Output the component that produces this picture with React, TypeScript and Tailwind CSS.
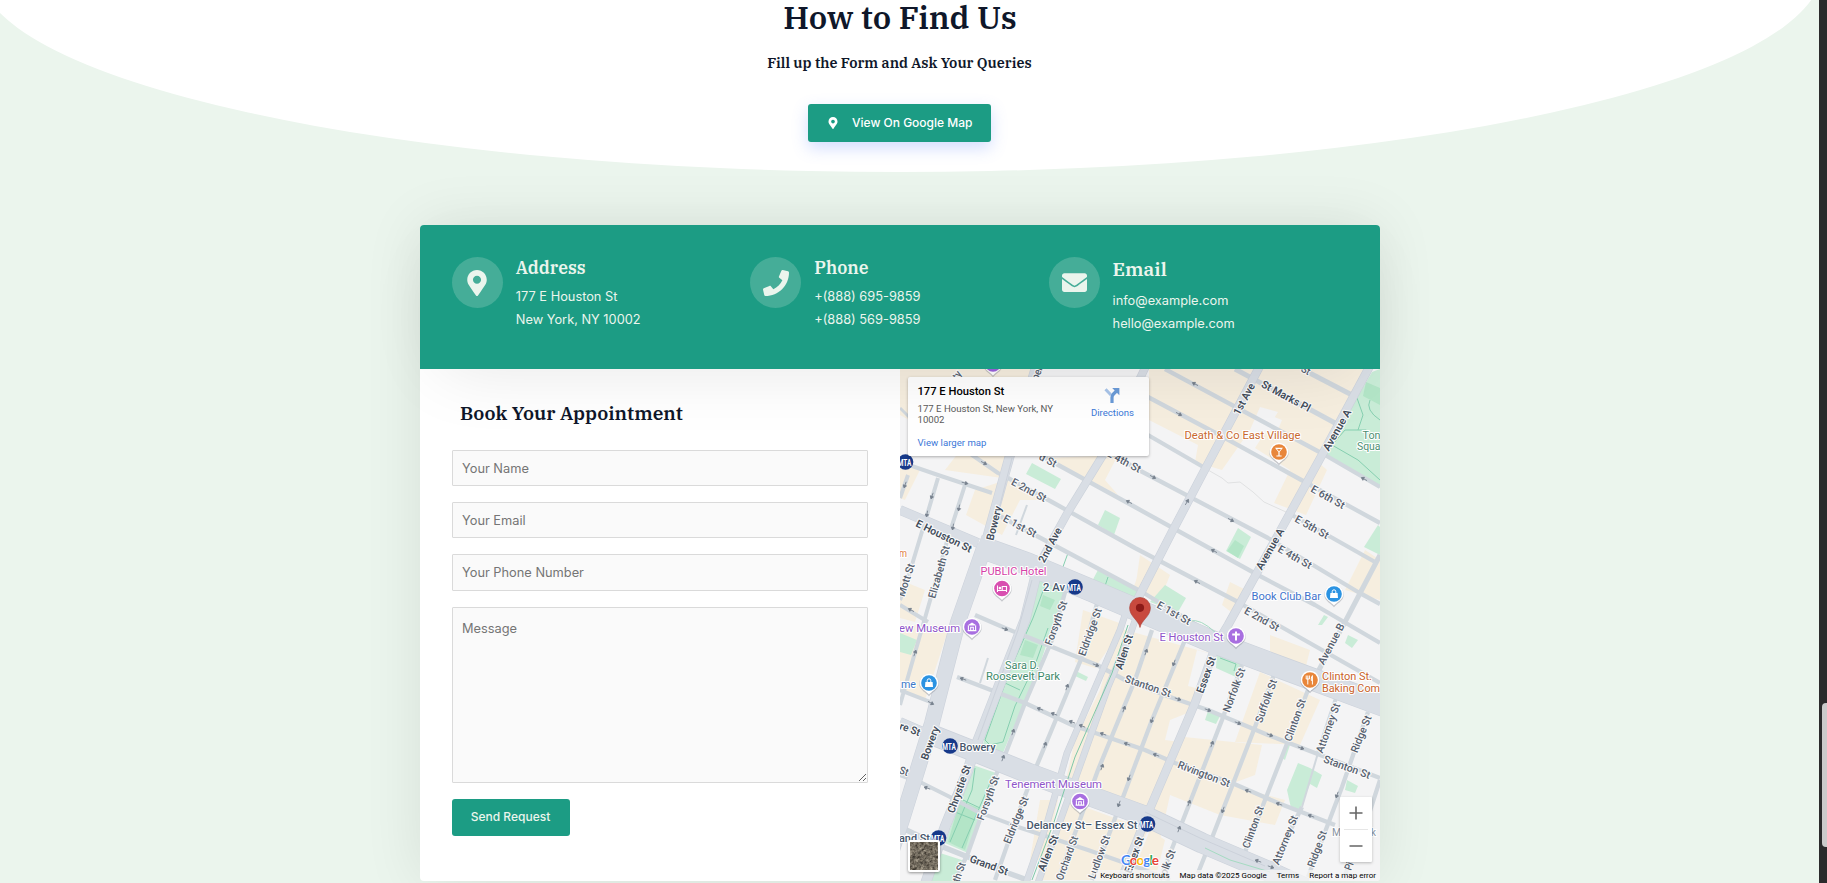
import React from "react";
import { FaEnvelope, FaMapMarkerAlt, FaPhone } from "react-icons/fa";

const serif = "font-['IBM_Plex_Serif','DejaVu_Serif_Condensed','DejaVu_Serif',serif]";

/* ---------- map data ---------- */

const tan = [
  "900,369 1032,369 1002,478 945,470 962,448 900,415",
  "1149,369 1368,369 1318,462 1327,470 1306,515 1274,503 1290,470 1255,448 1278,412 1260,407 1250,430 1222,470 1195,462 1198,445 1149,420",
  "900,462 920,470 905,500 900,498",
  "1006,480 1050,500 1020,500 1002,535 966,515 975,490",
  "1048,458 1118,495 1105,480 1118,455",
  "1140,555 1170,575 1160,600 1135,590",
  "1230,582 1250,592 1235,615 1222,605",
  "1365,550 1380,560 1380,600 1345,590",
  "1140,570 1128,602 1142,610",
  "900,580 925,590 915,622 900,618",
  "900,625 950,625 925,700 900,690",
  "1083,610 1125,625 1095,668 1075,662",
  "1118,628 1216,655 1150,815 1064,788 1075,740 1100,690",
  "1270,635 1310,650 1305,670 1270,662",
  "1260,672 1320,700 1300,745 1235,742 1250,700",
  "1165,735 1262,745 1255,775 1215,790 1160,780",
  "1155,765 1285,800 1275,825 1220,815 1170,795 1160,840 1135,815",
  "1065,800 1148,830 1125,880 1035,880",
  "1150,830 1165,840 1155,880 1130,880",
  "1040,800 1058,800 1045,860 1030,860",
];

const pale = [
  "1197,650 1215,655 1203,690 1188,686",
  "1170,720 1190,712 1180,742 1165,740",
  "1262,412 1282,420 1275,437 1255,430",
];

const green = [
  "1040,578 1067,585 1053,625 1038,670 1002,755 983,745 988,720 1027,620",
  "973,765 996,773 968,853 945,843",
  "940,853 965,861 955,881 927,881",
  "990,540 1032,558 1028,564 985,550",
  "1050,563 1086,578 1082,585 1046,572",
  "1098,570 1140,590 1134,602 1090,585",
  "1032,463 1061,479 1055,489 1026,474",
  "1105,510 1120,518 1114,535 1098,525",
  "1238,528 1251,537 1240,559 1226,551",
  "1165,585 1186,598 1178,612 1150,602",
  "1378,525 1380,527 1380,555 1364,547",
  "900,633 917,640 911,655 900,652",
  "1217,652 1242,665 1236,677 1216,668",
  "1208,711 1220,716 1216,724 1205,720",
  "1298,763 1310,768 1322,775 1317,788 1310,784 1300,810 1291,808 1287,790",
  "1290,745 1285,760 1282,758 1286,745",
  "1347,780 1358,786 1355,793 1345,790",
  "1076,671 1088,677 1086,681 1075,676",
  "1348,635 1358,640 1352,648 1345,643",
  "1324,615 1328,617 1322,625 1318,625",
];

const darkGreen = [
  "1235,540 1244,546 1238,558 1227,551",
  "1366,382 1380,388 1380,405 1363,396",
  "1043,595 1055,600 1050,610 1040,606",
  "1025,640 1038,645 1033,658 1020,655",
  "960,800 978,808 965,850 948,842",
];

const parkPaths = [
  "1047,580 1033,618 1010,670 985,740 990,745 1003,742 1015,706 1035,665 1048,628",
  "1005,683 1020,690 M1002,694 L1025,703",
  "975,768 972,790 950,842 M993,776 L962,848",
  "963,800 980,808 M955,812 L975,820",
  "1380,440 1366,430 1345,430 1332,445 1358,460 1380,480",
  "1357,398 1363,415 1358,430 M1370,400 Q1365,410 1380,420",
  "1068,553 1060,575 M1108,577 L1103,592",
  "1220,658 1236,664 1234,671",
];

const minor: [string, number][] = [
  ["900,462 938,475 992,493", 4],
  ["962,448 998,473 1008,478", 4],
  ["900,408 912,420", 3],
  ["908,475 900,498", 4],
  ["938,478 927,515 908,578 900,600", 4],
  ["965,485 948,538 925,618 912,663 900,705", 4],
  ["1027,505 1016,535", 2],
  ["998,515 1035,535 1142,592 1205,630", 4.3],
  ["1008,478 1052,502 1135,548 1238,602 1278,625 1380,683", 4.3],
  ["1040,455 1135,507 1258,575 1315,605 1380,643", 4.3],
  ["1115,455 1135,468 1268,538 1358,592 1380,604", 4.3],
  ["1148,435 1205,468", 4.3],
  ["1292,515 1375,562", 4.3],
  ["1148,397 1225,438 1305,482 1380,523", 4.3],
  ["1165,369 1325,455 1380,487", 4.3],
  ["1235,369 1335,423", 5],
  ["1302,369 1352,395", 5],
  ["1380,555 1345,622 1308,690", 5],
  ["900,605 928,622", 4],
  ["900,690 933,703", 4],
  ["957,677 1025,703 1072,725 1145,750 1175,763 1232,783 1278,803 1335,825", 4.3],
  ["975,615 1005,628 1097,665 1125,680 1170,697 1208,710 1268,735 1302,748 1380,778", 4.3],
  ["900,775 922,783 950,797 978,812 1018,827 1088,850 1145,870 1170,880", 4],
  ["900,827 938,845 968,857 1008,873 1030,881", 5.5],
  ["1067,585 1052,640 1025,703 1005,755 995,777 968,853 955,881", 4.3],
  ["1098,600 1082,657 1032,777 1016,820 995,880", 4.3],
  ["1152,630 1135,680 1098,770 1058,880", 4.3],
  ["1185,640 1152,720 1108,837 1092,880", 4.3],
  ["1242,665 1222,720 1178,833 1160,880", 4.3],
  ["1275,672 1255,727 1210,843 1198,873", 4.3],
  ["1308,690 1265,800 1242,860", 4.3],
  ["1337,695 1318,753", 4],
  ["1318,753 1302,807", 2],
  ["1302,807 1272,867", 4.3],
  ["1368,712 1342,787 1308,877", 4.3],
  ["1380,780 1368,817 1345,875", 4.3],
  ["988,658 980,683", 2],
];

const major: [string, number][] = [
  ["1038,360 1010,455 985,545", 9],
  ["985,545 958,622 932,723 902,820 892,850", 15],
  ["900,510 978,543", 9],
  ["978,546 1028,564 1095,592 1142,612 1218,644 1285,669 1385,706", 22],
  ["1146,366 1103,455 1068,512 1036,570", 7.5],
  ["1036,575 1025,620 1008,663 975,748 968,770 945,827 925,885", 10],
  ["1262,362 1202,475 1172,532 1133,608", 8],
  ["1126,612 1120,630 1067,753 1048,820 1026,883", 6],
  ["1138,612 1130,635 1108,687 1082,760 1058,827 1038,883", 6],
  ["1372,362 1322,455 1278,535 1228,625 1216,645 1195,703 1148,813 1120,883", 8],
  ["900,722 930,735", 9],
  ["930,734 978,753 1028,773 1082,793 1145,816 1202,843 1268,871 1305,888", 20],
];

const arrows: [number, number, number][] = [
  [984, 463, 28], [905, 485, 110], [932, 496, 110], [965, 483, 14], [927, 514, 100], [959, 508, 100], [953, 527, 100],
  [1129, 502, 208], [1195, 384, 208], [1179, 414, 28], [1153, 477, 28], [1231, 520, 28], [1214, 551, 208], [1197, 582, 208], [1187, 502, -60],
  [1364, 479, 208], [911, 610, 208], [1005, 629, 20], [1096, 665, 20], [915, 653, -70], [963, 679, 200], [931, 703, 28], [1067, 687, -70],
  [1040, 709, 200], [1054, 714, 200], [1072, 722, 200], [1082, 726, 200], [1103, 734, 200], [1127, 744, 200], [1013, 732, -70], [1045, 745, -70],
  [1124, 709, -70], [1102, 767, -70], [1129, 778, 110], [1119, 804, 110], [1003, 758, -70], [927, 788, 200], [1146, 652, -70], [1174, 663, 110],
  [1152, 720, 110], [1178, 699, 20], [1208, 710, 20], [1238, 723, 20], [1270, 735, 20], [1301, 748, 20], [1212, 744, -70], [1156, 755, 200],
  [1248, 791, 200], [1279, 804, 200], [1311, 816, 200], [1189, 803, -70], [1223, 810, 110], [1179, 829, -70], [1337, 795, 110], [1258, 861, 200], [1271, 867, 20],
];

type Street = [string, number, number, number, number];
const streets: Street[] = [
  ["St Marks Pl", 1286, 396, 28, 54], ["1st Ave", 1244, 399, -62, 34], ["Avenue A", 1337, 430, -60, 46],
  ["Avenue A", 1270, 549, -60, 46], ["E 6th St", 1328, 497, 29, 37], ["E 5th St", 1312, 527, 29, 37],
  ["E 4th St", 1295, 557, 29, 37], ["E 4th St", 1124, 461, 28, 37], ["d St", 1048, 460, 28, 18],
  ["E 2nd St", 1029, 490, 28, 38], ["E 1st St", 1020, 526, 28, 36], ["E 1st St", 1174, 613, 29, 37],
  ["E 2nd St", 1262, 619, 29, 38], ["Bowery", 994, 523, -76, 35], ["2nd Ave", 1050, 545, -62, 38],
  ["E Houston St", 944, 536, 26, 61], ["Elizabeth St", 939, 572, -74, 54], ["Mott St", 906, 580, -72, 34],
  ["Forsyth St", 1056, 623, -70, 46], ["Eldridge St", 1090, 632, -70, 50], ["Allen St", 1124, 652, -72, 36],
  ["Allen St", 1048, 853, -68, 38], ["Essex St", 1206, 675, -70, 38], ["Norfolk St", 1234, 690, -70, 46],
  ["Suffolk St", 1266, 701, -70, 45], ["Clinton St", 1295, 720, -70, 44], ["Attorney St", 1328, 728, -70, 52],
  ["Ridge St", 1361, 734, -68, 39], ["Clinton St", 1253, 827, -70, 44], ["Attorney St", 1285, 840, -68, 52],
  ["Ridge St", 1317, 849, -70, 38], ["Avenue B", 1331, 644, -62, 45], ["Stanton St", 1148, 686, 19, 48],
  ["Stanton St", 1347, 767, 20, 49], ["Rivington St", 1204, 774, 21, 55], ["Bowery", 930, 743, -70, 35],
  ["Chrystie St", 959, 789, -70, 50], ["Forsyth St", 988, 798, -70, 46], ["th St", 959, 872, -70, 20],
  ["Eldridge St", 1016, 820, -68, 50], ["Orchard St", 1067, 858, -70, 46], ["Ludlow St", 1099, 857, -70, 45],
  ["Essex St", 1134, 855, -70, 38], ["folk St", 1167, 864, -70, 30], ["Grand St", 989, 865, 20, 40],
  ["re St", 910, 729, 20, 21], ["St", 904, 771, 20, 9], ["Pi", 1349, 866, -70, 8],
  ["St", 1306, 370, 29, 9], ["per", 1037, 373, -70, 14], ["ty", 957, 375, -55, 8],
];
const boldStreets = new Set(["St Marks Pl", "E Houston St", "Avenue A", "1st Ave", "2nd Ave", "Bowery", "Essex St", "Allen St", "Chrystie St", "Grand St", "re St"]);

type Place = [string, number, number, number, string];
const ink = "#46566b";
const places: Place[] = [
  ["Death & Co East Village", 1184.5, 438.5, 116, "#c9692f"],
  ["Ton", 1362.5, 438.5, 18, "#4d8f72"],
  ["Squa", 1357, 449.5, 23.5, "#4d8f72"],
  ["PUBLIC Hotel", 980.5, 575, 66, "#d63fa8"],
  ["2 Av", 1043, 591, 22, ink],
  ["m", 899, 557, 8, "#e07b3c"],
  ["ew Museum", 899, 632, 61, "#8f55c9"],
  ["me", 901, 688, 15, "#3b78c8"],
  ["Sara D.", 1005, 668.5, 34, "#3f8a6b"],
  ["Roosevelt Park", 986, 679.5, 74, "#3f8a6b"],
  ["Tenement Museum", 1005, 788, 97, "#8f55c9"],
  ["Bowery", 959.5, 750.5, 36, ink],
  ["Delancey St– Essex St", 1026.5, 829, 111, ink],
  ["and St", 899, 842, 31, ink],
  ["E Houston St", 1159.5, 641, 64, "#8f55c9"],
  ["Clinton St.", 1322, 680, 50, "#c9622a"],
  ["Baking Com", 1322, 691.5, 58, "#c9622a"],
  ["Book Club Bar", 1251.5, 599.5, 69.5, "#3f74cc"],
  ["M", 1332, 836, 9, "#8994a3"],
  ["k", 1371, 836, 5, "#8994a3"],
];

function Marker({ x, y, color, children }: { x: number; y: number; color: string; children?: React.ReactNode }) {
  return (
    <g transform={`translate(${x} ${y})`}>
      <path d="M-9.6 1.5 A9.7 9.7 0 1 1 9.6 1.5 C8.5 6.5 3.5 8.5 0 12.5 C-3.5 8.5 -8.5 6.5 -9.6 1.5Z" fill="#8a8f99" opacity=".45" transform="translate(0 .7)" />
      <path d="M-9.3 1.5 A9.4 9.4 0 1 1 9.3 1.5 C8 6 3 8 0 11.6 C-3 8 -8 6 -9.3 1.5Z" fill="#fff" />
      <circle r="7.8" fill={color} />
      {children}
    </g>
  );
}

const Museum = () => (
  <g fill="none" stroke="#fff" strokeWidth="1.1">
    <path d="M-4.6 -1.5 L0 -4.4 L4.6 -1.5Z" fill="#fff" stroke="none" />
    <path d="M-3.6 -1.2 V3.6 M3.6 -1.2 V3.6 M-4.4 3.6 H4.4 M-1.3 3 V.3 H1.3 V3" />
  </g>
);

const Bag = () => (
  <g>
    <path d="M-3.6 -1 H3.6 L4 4 H-4Z" fill="#fff" />
    <path d="M-1.8 -1 V-2.4 A1.8 1.8 0 0 1 1.8 -2.4 V-1" fill="none" stroke="#fff" />
  </g>
);

function Subway({ x, y }: { x: number; y: number }) {
  return (
    <g transform={`translate(${x} ${y})`}>
      <circle r="7.8" fill="#16398a" />
      <text y="3.5" x="-1" fontSize="9.6" fontWeight="700" fill="#fff" textAnchor="middle" textLength="13.6" lengthAdjust="spacingAndGlyphs">
        MTA
      </text>
    </g>
  );
}

function StreetMap() {
  return (
    <svg viewBox="900 369 480 512" className="block h-[512px] w-[480px] font-[Roboto,sans-serif]">
      <rect x="900" y="369" width="480" height="512" fill="#f4f4f5" />
      {tan.map((p) => <polygon key={p} points={p} fill="#f6eedf" />)}
      {pale.map((p) => <polygon key={p} points={p} fill="#f4f4f5" />)}
      <polygon points="1372,372 1380,369 1380,488 1324,455" fill="#c9ecd7" />
      {green.map((p) => <polygon key={p} points={p} fill="#c9ecd7" />)}
      {darkGreen.map((p) => <polygon key={p} points={p} fill="#b3e5c7" />)}
      {parkPaths.map((p) => <path key={p} d={"M" + p} fill="none" stroke="#86cfb0" strokeWidth="1" />)}
      <path d="M1208 470 L1222 478 L1228 483 L1240 482 L1253 492 L1264 502 L1286 512" fill="none" stroke="#e0e1e2" />
      {minor.map(([p, w]) => <polyline key={p} points={p} fill="none" stroke="#d0d7dd" strokeWidth={w} strokeLinejoin="round" />)}
      {major.map(([p, w]) => <polyline key={p} points={p} fill="none" stroke="#ccd2db" strokeWidth={w + 0.8} strokeLinejoin="round" />)}
      {major.map(([p, w]) => <polyline key={p} points={p} fill="none" stroke="#d9dee5" strokeWidth={w - 0.4} strokeLinejoin="round" />)}
      <path d="M1012 458 L991 540 M1032 580 L1018 630 L978 740 M1145 812 L1200 838 L1265 866" fill="none" stroke="#c6ccd6" strokeWidth=".7" />
      <polyline points="1128,625 1112,673 1075,757 1054,822 1032,880" fill="none" stroke="#7fc8a8" strokeWidth="1" />
      <path d="M1190 621 Q1200 618 1216 633 M1205 848 L1230 860 L1270 872" fill="none" stroke="#a5dbc2" />
      {arrows.map(([x, y, r]) => (
        <path key={`${x}-${y}`} d="M-3.4 0 H1 M3 0 L.4 -1.7 V1.7Z" transform={`translate(${x} ${y}) rotate(${r})`} fill="#77818d" stroke="#77818d" strokeWidth=".8" />
      ))}
      {streets.map(([t, x, y, r, w]) => (
        <text
          key={`${t}${x}${y}`}
          transform={`translate(${x} ${y}) rotate(${r})`}
          y="3.7"
          textAnchor="middle"
          textLength={w}
          fontSize="10.6"
          fontWeight={boldStreets.has(t) ? 600 : 500}
          fill={boldStreets.has(t) ? "#434d5b" : "#56606e"}
          stroke="#fafafa"
          strokeWidth="2.2"
          strokeLinejoin="round"
          paintOrder="stroke"
          lengthAdjust="spacingAndGlyphs"
        >
          {t}
        </text>
      ))}
      <Marker x={993} y={364} color="#9a62dc" />
      <Marker x={1279} y={452} color="#e8863a">
        <path d="M-4 -4.2 H4 L.6 0 V3.4 H2.6 V4.4 H-2.6 V3.4 H-.6 V0Z" fill="#fff" />
        <path d="M-2 -3 H2 L0 -.6Z" fill="#e8863a" />
      </Marker>
      <Marker x={1002} y={588.5} color="#d84fb0">
        <path d="M-4.5 -3 V3.4 M-4.5 2 H4.5 M4.5 3.4 V-2 H.2 V1.5" fill="none" stroke="#fff" strokeWidth="1.1" />
        <circle cx="-2.1" cy="-.4" r="1.3" fill="#fff" />
      </Marker>
      <Marker x={972} y={627} color="#a86fe0"><Museum /></Marker>
      <Marker x={1080} y={801.5} color="#a86fe0"><Museum /></Marker>
      <Marker x={929} y={683} color="#2b93e2"><Bag /></Marker>
      <Marker x={1334} y={594} color="#2b93e2"><Bag /></Marker>
      <Marker x={1236} y={636} color="#a86fe0">
        <path d="M0 -4.6 V4.6 M-3.8 -1.6 H3.8" stroke="#fff" strokeWidth="2" />
      </Marker>
      <Marker x={1310} y={680} color="#e8863a">
        <path d="M-2.2 -4.5 V4.5 M-3.8 -4.5 V-1 H-.6 V-4.5 M2.4 4.5 V-4.4 Q.8 -2 1.3 .4 H2.4" fill="none" stroke="#fff" strokeWidth="1" />
      </Marker>
      {places.map(([t, x, y, w, c]) => (
        <text key={`${t}${x}`} x={x} y={y} textLength={w} lengthAdjust="spacingAndGlyphs" fontSize="11.2" fontWeight={c === ink ? 500 : 400} fill={c} stroke="#fff" strokeWidth="2.2" strokeLinejoin="round" paintOrder="stroke">
          {t}
        </text>
      ))}
      <Subway x={905.5} y={462} />
      <Subway x={1075} y={587} />
      <Subway x={950} y={746} />
      <Subway x={938.5} y={838} />
      <Subway x={1147.5} y={824} />
      <path d="M1140 627.5 C1138.5 620 1129.6 616.5 1129.6 607.8 A10.4 10.4 0 0 1 1150.4 607.8 C1150.4 616.5 1141.5 620 1140 627.5Z" fill="#c8493e" stroke="#a93a31" strokeWidth=".6" />
      <circle cx="1140" cy="607.8" r="4.1" fill="#8c1a18" />
      <text x="1121" y="864.5" fontSize="13.5" textLength="38" className="font-[Lato,sans-serif]" fontWeight="700" stroke="#fff" strokeWidth="1.8" paintOrder="stroke">
        <tspan fill="#4285f4">G</tspan>
        <tspan fill="#ea4335">o</tspan>
        <tspan fill="#fbbc04">o</tspan>
        <tspan fill="#4285f4">g</tspan>
        <tspan fill="#34a853">l</tspan>
        <tspan fill="#ea4335">e</tspan>
      </text>
    </svg>
  );
}

function SatelliteThumb() {
  return (
    <div className="absolute bottom-[9px] left-[8px] h-8 w-8 overflow-hidden rounded-[2px] border-2 border-white bg-[#6c6657] shadow-[0_1px_3px_rgba(0,0,0,0.4)]">
      <svg className="block h-full w-full" viewBox="0 0 28 28">
        <filter id="grain" colorInterpolationFilters="sRGB">
          <feTurbulence type="fractalNoise" baseFrequency="0.35" numOctaves="3" />
          <feColorMatrix values="0.7 0.2 0 0 0.0  0.68 0.2 0 0 -0.02  0.62 0.2 0 0 -0.04  0 0 0 0 1" />
        </filter>
        <rect width="28" height="28" filter="url(#grain)" />
        <path d="M0 20 L12 8 L28 2 M4 28 L18 14 L28 10" stroke="#3d3a31" strokeWidth="1.2" fill="none" opacity=".4" />
      </svg>
    </div>
  );
}

function MapPanel() {
  return (
    <div className="relative h-[512px] w-[480px] overflow-hidden rounded-br font-[Roboto,sans-serif]">
      <StreetMap />
      <div className="absolute left-[8px] top-[8px] flex h-[79px] w-[241px] justify-between rounded-[2px] bg-white pl-[9.5px] pr-[15px] shadow-[0_1px_3px_rgba(0,0,0,0.3)]">
        <div className="flex w-[150px] flex-col">
          <div className="mt-[8px] whitespace-nowrap text-[11.2px] font-medium leading-[14px] text-black">177 E Houston St</div>
          <div className="mt-[5px] text-[9.6px] leading-[10.7px] text-[#5b5b5b]">
            177 E Houston St, New York, NY
            <br />
            10002
          </div>
          <a className="mt-[12px] text-[9.6px] leading-[12px] text-[#3b78d8]">View larger map</a>
        </div>
        <div className="flex flex-col items-center">
          <svg className="mt-[10px] h-[17px] w-[16px]" viewBox="0 0 16 17">
            <path d="M1.5 2.2 L7 8" stroke="#a9c5ea" strokeWidth="3" />
            <path d="M8 16 V10.5 Q8 8.5 9.5 7 L12.5 4" stroke="#6a9bd8" strokeWidth="3.2" fill="none" />
            <path d="M8.2 1 H15.4 V8.2Z" fill="#6a9bd8" />
          </svg>
          <div className="mt-[3px] text-[9.6px] leading-[12px] text-[#3b78d8]">Directions</div>
        </div>
      </div>
      <SatelliteThumb />
      <div className="absolute bottom-[19px] right-[8px] flex h-[65px] w-8 flex-col items-center rounded-[1px] bg-white shadow-[0_1px_3px_rgba(0,0,0,0.25)]">
        <svg className="h-[65px] w-8" viewBox="0 0 32 65">
          <path d="M16 9.5 V22.5 M9.5 16 H22.5 M9.5 49 H22.5" stroke="#666" strokeWidth="1.6" />
          <path d="M4 32.5 H28" stroke="#e6e6e6" />
        </svg>
      </div>
      <div className="absolute bottom-0 right-0 flex h-[11px] items-center gap-[10px] bg-[#f5f5f5]/75 pl-[4px] pr-[4px] text-[8px] leading-[11px] text-black">
        <span>Keyboard shortcuts</span>
        <span>Map data ©2025 Google</span>
        <span>Terms</span>
        <span>Report a map error</span>
      </div>
    </div>
  );
}

/* ---------- contact card ---------- */

function InfoItem({ icon, title, large, lines }: { icon: React.ReactNode; title: string; large?: boolean; lines: string[] }) {
  return (
    <div className="flex w-[298.4px] gap-[12.8px]">
      <div className="flex h-[51px] w-[51px] shrink-0 items-center justify-center rounded-full bg-[#ebf5ed]/20">{icon}</div>
      <div>
        <h3 className={`${serif} whitespace-nowrap font-semibold ${large ? "mb-[8px] text-[19.2px] leading-6" : "mt-[-1px] mb-[5px] text-[17.6px] leading-6"}`}>
          {title}
        </h3>
        {lines.map((l) => (
          <p key={l} className="whitespace-nowrap text-[12.8px] leading-[23px]">{l}</p>
        ))}
      </div>
    </div>
  );
}

const field =
  "block w-full rounded-[1px] border border-[#dadada] bg-[#fafafa] px-[9px] text-[12.8px] text-gray-800 outline-none placeholder:text-[#757575]";

export default function App() {
  return (
    <div className="flex h-[883px] w-[1827px] overflow-hidden bg-[#ebf5ed] font-[Inter,sans-serif]">
      <main className="relative flex h-full w-[1819px] flex-col items-center overflow-hidden pr-[19px]">
        <div className="absolute left-[-22px] top-[-234px] h-[406px] w-[1844px] rounded-[50%] bg-white" />
        <header className="relative flex h-[225px] flex-col items-center text-[#0f172a]">
          <h1 className={`${serif} mt-[-3px] whitespace-nowrap text-[32px] font-semibold leading-[40px]`}>How to Find Us</h1>
          <p className={`${serif} mr-px mt-[15px] whitespace-nowrap text-[14.4px] font-semibold leading-[22px]`}>
            Fill up the Form and Ask Your Queries
          </p>
          <button className="mr-px mt-[30px] flex h-[38px] w-[183px] items-center rounded-[3px] bg-[#1c9c84] pl-[20px] text-[12px] font-medium text-white shadow-[0_6px_16px_rgba(80,120,255,0.25)]">
            <FaMapMarkerAlt className="h-3 w-[10px]" />
            <span className="ml-[14px] whitespace-nowrap">View On Google Map</span>
          </button>
        </header>

        <section className="relative flex h-[656px] w-[960px] shrink-0 flex-col rounded bg-white shadow-[0_0_60px_rgba(0,0,0,0.09)]">
          <div className="relative z-10 flex h-[144px] shrink-0 rounded-t bg-[#1c9c84] pl-8 pt-8 text-[#ebf5ed] shadow-[0_20px_70px_-20px_rgba(0,0,0,0.1)]">
            <InfoItem icon={<FaMapMarkerAlt className="mr-px h-[26px] w-[20px]" />} title="Address" lines={["177 E Houston St", "New York, NY 10002"]} />
            <InfoItem icon={<FaPhone className="h-[26px] w-[26px]" />} title="Phone" lines={["+(888) 695-9859", "+(888) 569-9859"]} />
            <InfoItem icon={<FaEnvelope className="h-[25px] w-[25px]" />} title="Email" large lines={["info@example.com", "hello@example.com"]} />
          </div>
          <div className="flex h-[512px]">
            <form className="flex w-[480px] flex-col px-8 pt-[30px]">
              <h2 className={`${serif} mb-[23px] ml-2 whitespace-nowrap text-[19.2px] font-semibold leading-[28px] text-[#0f172a]`}>
                Book Your Appointment
              </h2>
              <input className={`${field} mb-4 h-[36px]`} placeholder="Your Name" />
              <input className={`${field} mb-4 h-[36px]`} placeholder="Your Email" />
              <input className={`${field} mb-4 h-[37px]`} placeholder="Your Phone Number" />
              <textarea className={`${field} mb-4 h-[176px] resize-y pt-[11px] leading-5`} placeholder="Message" />
              <button type="button" className="h-[37px] w-[118px] rounded-[3px] bg-[#1c9c84] pb-[2px] pr-px text-[12px] font-medium text-[#ebf5ed]">
                Send Request
              </button>
            </form>
            <MapPanel />
          </div>
        </section>
      </main>
      <div className="flex h-full w-2 justify-end bg-[#2b2b2c] pt-[703px]">
        <div className="h-[144px] w-[5px] rounded-l bg-[#cbcbcb]" />
      </div>
    </div>
  );
}
